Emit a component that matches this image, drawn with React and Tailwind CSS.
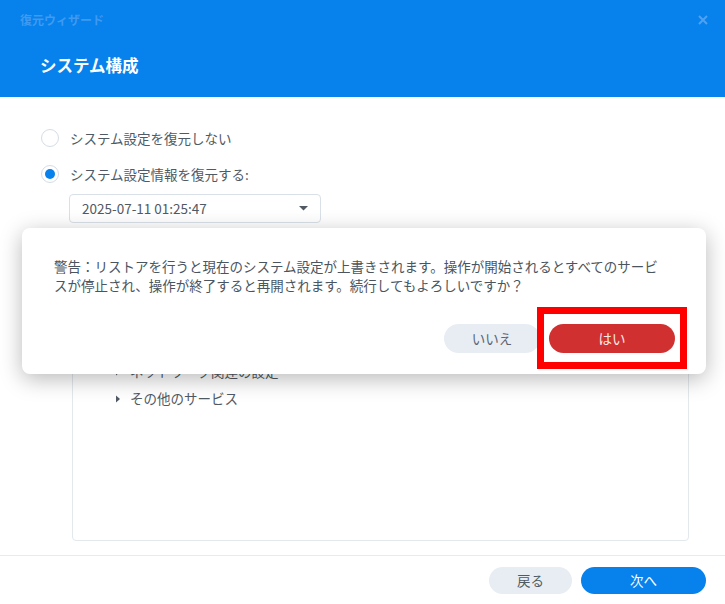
import React from "react";

const font = { fontFamily: '"Noto Sans CJK JP", "Noto Sans", sans-serif' };

function Caret() {
  return (
    <svg width="6" height="8" viewBox="0 0 6 8" className="shrink-0">
      <path d="M1 0.5 L5 4 L1 7.5 Z" fill="#505a64" />
    </svg>
  );
}

export default function App() {
  const items = ["ネットワーク関連の設定", "その他のサービス"];
  return (
    <div
      className="relative w-[725px] h-[604px] bg-white flex flex-col overflow-hidden text-[#505a64]"
      style={font}
    >
      {/* header */}
      <div className="h-[97px] bg-[#0781ec] shrink-0 flex flex-col">
        <div className="flex items-center justify-between pl-[20px] pr-[17px] pt-[10px] h-[30px]">
          <span className="text-[12px] font-bold text-[#3f9af0] leading-none">
            復元ウィザード
          </span>
          <svg width="10" height="10" viewBox="0 0 10 10">
            <path d="M1 1 L9 9 M9 1 L1 9" stroke="#4fa2f2" strokeWidth="2" />
          </svg>
        </div>
        <div className="pl-[40px] pt-[27px] text-[16.5px] font-bold text-white leading-none">
          システム構成
        </div>
      </div>

      {/* body */}
      <div className="flex-1 flex flex-col pl-[41px] pt-[23px]">
        <div className="h-[36px] flex items-center gap-[11px]">
          <div className="w-[18px] h-[18px] rounded-full border border-[#d5dde5] bg-white" />
          <span className="text-[13.5px]">システム設定を復元しない</span>
        </div>
        <div className="h-[36px] flex items-center gap-[11px]">
          <div className="w-[18px] h-[18px] rounded-full border border-[#d5dde5] bg-white flex items-center justify-center">
            <div className="w-[10px] h-[10px] rounded-full bg-[#0781ec]" />
          </div>
          <span className="text-[13.5px]">システム設定情報を復元する:</span>
        </div>
        <div className="mt-[2px] ml-[28px] w-[252px] h-[29px] border border-[#d9e0e7] rounded-[4px] flex items-center justify-between pl-[12px] pr-[12px]">
          <span className="text-[13.5px]">2025-07-11 01:25:47</span>
          <svg width="9" height="5" viewBox="0 0 9 5">
            <path d="M0 0 H9 L4.5 4.5 Z" fill="#505a64" />
          </svg>
        </div>
        <div className="mt-[13px] ml-[31px] w-[617px] h-[305px] border border-[#e3e8ec] rounded-[4px] pt-[121px] pl-[42px]">
          {items.map((t) => (
            <div key={t} className="h-[27px] flex items-center gap-[9px]">
              <Caret />
              <span className="text-[13.5px]">{t}</span>
            </div>
          ))}
        </div>
      </div>

      {/* footer */}
      <div className="h-[49px] shrink-0 border-t border-[#e6ebef] flex items-center justify-end gap-[9px] pr-[19px]">
        <button className="w-[83px] h-[27px] rounded-full bg-[#e8edf3] text-[13.5px] text-[#505a64]">
          戻る
        </button>
        <button className="w-[125px] h-[27px] rounded-full bg-[#0781ec] text-[13.5px] text-white">
          次へ
        </button>
      </div>

      {/* confirm dialog */}
      <div className="absolute left-[22px] top-[228px] w-[684px] h-[146px] bg-white rounded-[8px] shadow-[0_5px_22px_rgba(0,0,0,0.28)] flex flex-col pl-[32px] pr-[31px] pt-[29px]">
        <p className="text-[13.5px] leading-[19px] text-[#4a5560] pr-[6px]">
          警告：リストアを行うと現在のシステム設定が上書きされます。操作が開始されるとすべてのサービスが停止され、操作が終了すると再開されます。続行してもよろしいですか？
        </p>
        <div className="mt-[29px] flex justify-end gap-[9px]">
          <button className="w-[96px] h-[29px] rounded-full bg-[#e8edf3] text-[13.5px] text-[#5a6570]">
            いいえ
          </button>
          <div className="relative">
            <button className="w-[126px] h-[29px] rounded-full bg-[#d13030] text-[13.5px] text-[#fbe9e9]">
              はい
            </button>
            <div className="absolute left-[-12px] right-[-12px] top-[-17px] bottom-[-16px] border-[7px] border-[#ff0000] pointer-events-none" />
          </div>
        </div>
      </div>
    </div>
  );
}
